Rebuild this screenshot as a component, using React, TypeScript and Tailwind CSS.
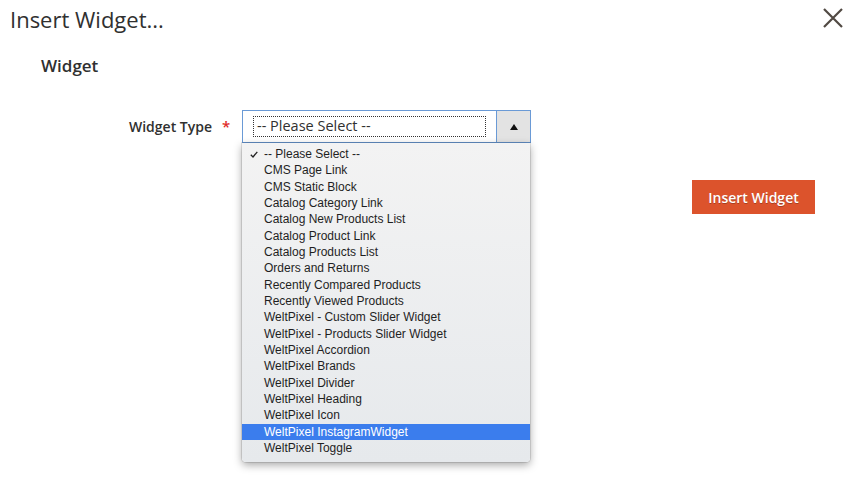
import React from "react";

const options = [
  "-- Please Select --",
  "CMS Page Link",
  "CMS Static Block",
  "Catalog Category Link",
  "Catalog New Products List",
  "Catalog Product Link",
  "Catalog Products List",
  "Orders and Returns",
  "Recently Compared Products",
  "Recently Viewed Products",
  "WeltPixel - Custom Slider Widget",
  "WeltPixel - Products Slider Widget",
  "WeltPixel Accordion",
  "WeltPixel Brands",
  "WeltPixel Divider",
  "WeltPixel Heading",
  "WeltPixel Icon",
  "WeltPixel InstagramWidget",
  "WeltPixel Toggle",
];

const selected = 0;
const hovered = 17;

const App = () => {
  return (
    <div className="relative h-[483px] w-full overflow-hidden bg-white font-['Open_Sans',sans-serif] text-[#303030]">
      <div className="flex items-start justify-between pl-[10px] pr-0 pt-[3px]">
        <h1 className="text-[22px] leading-[32px] font-normal text-[#303030]">
          Insert Widget...
        </h1>
        <button className="mt-[1px] flex h-[28px] w-[28px] items-center justify-center">
          <svg width="22" height="22" viewBox="0 0 22 22">
            <path
              d="M2 2 L20 20 M20 2 L2 20"
              stroke="#514943"
              strokeWidth="2.2"
              fill="none"
            />
          </svg>
        </button>
      </div>

      <div className="pl-[41px] pt-[20px]">
        <h2 className="text-[17px] leading-[22px] font-semibold text-[#303030]">
          Widget
        </h2>
      </div>

      <div className="mt-[33px] flex items-center">
        <label className="w-[212px] text-right text-[14px] font-semibold text-[#303030]">
          Widget Type
        </label>
        <span className="ml-[10px] w-[20px] text-[15px] font-semibold text-[#e02b27]">
          *
        </span>

        <div className="relative">
          <div className="flex h-[33px] w-[289px] border border-[#6a9ad6] bg-white">
            <div className="flex flex-1 items-center pl-[10px] pr-[10px]">
              <div className="flex h-[21px] w-full items-center border border-dotted border-[#333] pl-[3px] text-[14.5px] leading-none text-[#303030]">
                -- Please Select --
              </div>
            </div>
            <div className="flex w-[34px] items-center justify-center border-l border-[#6a9ad6] bg-[#e3e3e3]">
              <svg width="8" height="6" viewBox="0 0 8 6">
                <path d="M0 6 L4 0 L8 6 Z" fill="#111" />
              </svg>
            </div>
          </div>

          <ul className="absolute left-0 top-full z-10 w-[288px] rounded-b-[4px] bg-gradient-to-b from-[#f3f3f3] to-[#e6e9ec] pb-[6px] pt-[3px] font-['Liberation_Sans',Arial,sans-serif] text-[12px] text-[#1f1f1f] shadow-[0_3px_8px_rgba(0,0,0,0.35)] ring-1 ring-black/10">
            {options.map((opt, i) => (
              <li
                key={opt}
                className={`relative flex h-[16.33px] items-center pl-[22px] leading-none ${
                  i === hovered ? "bg-[#3b7ded] text-white" : ""
                }`}
              >
                {i === selected && (
                  <svg
                    className="absolute left-[8px] top-[5px]"
                    width="8"
                    height="7"
                    viewBox="0 0 8 7"
                  >
                    <path
                      d="M0.8 3.8 L3 6 L7.3 0.8"
                      stroke="#222"
                      strokeWidth="1.3"
                      fill="none"
                    />
                  </svg>
                )}
                {opt}
              </li>
            ))}
          </ul>
        </div>
      </div>

      <div className="mt-[37px] flex justify-end pr-[32px]">
        <button className="h-[34px] w-[123px] bg-[#dc532c] text-[14px] font-semibold text-white [text-shadow:0_1px_0_rgba(0,0,0,0.25)]">
          Insert Widget
        </button>
      </div>
    </div>
  );
};

export default App;
